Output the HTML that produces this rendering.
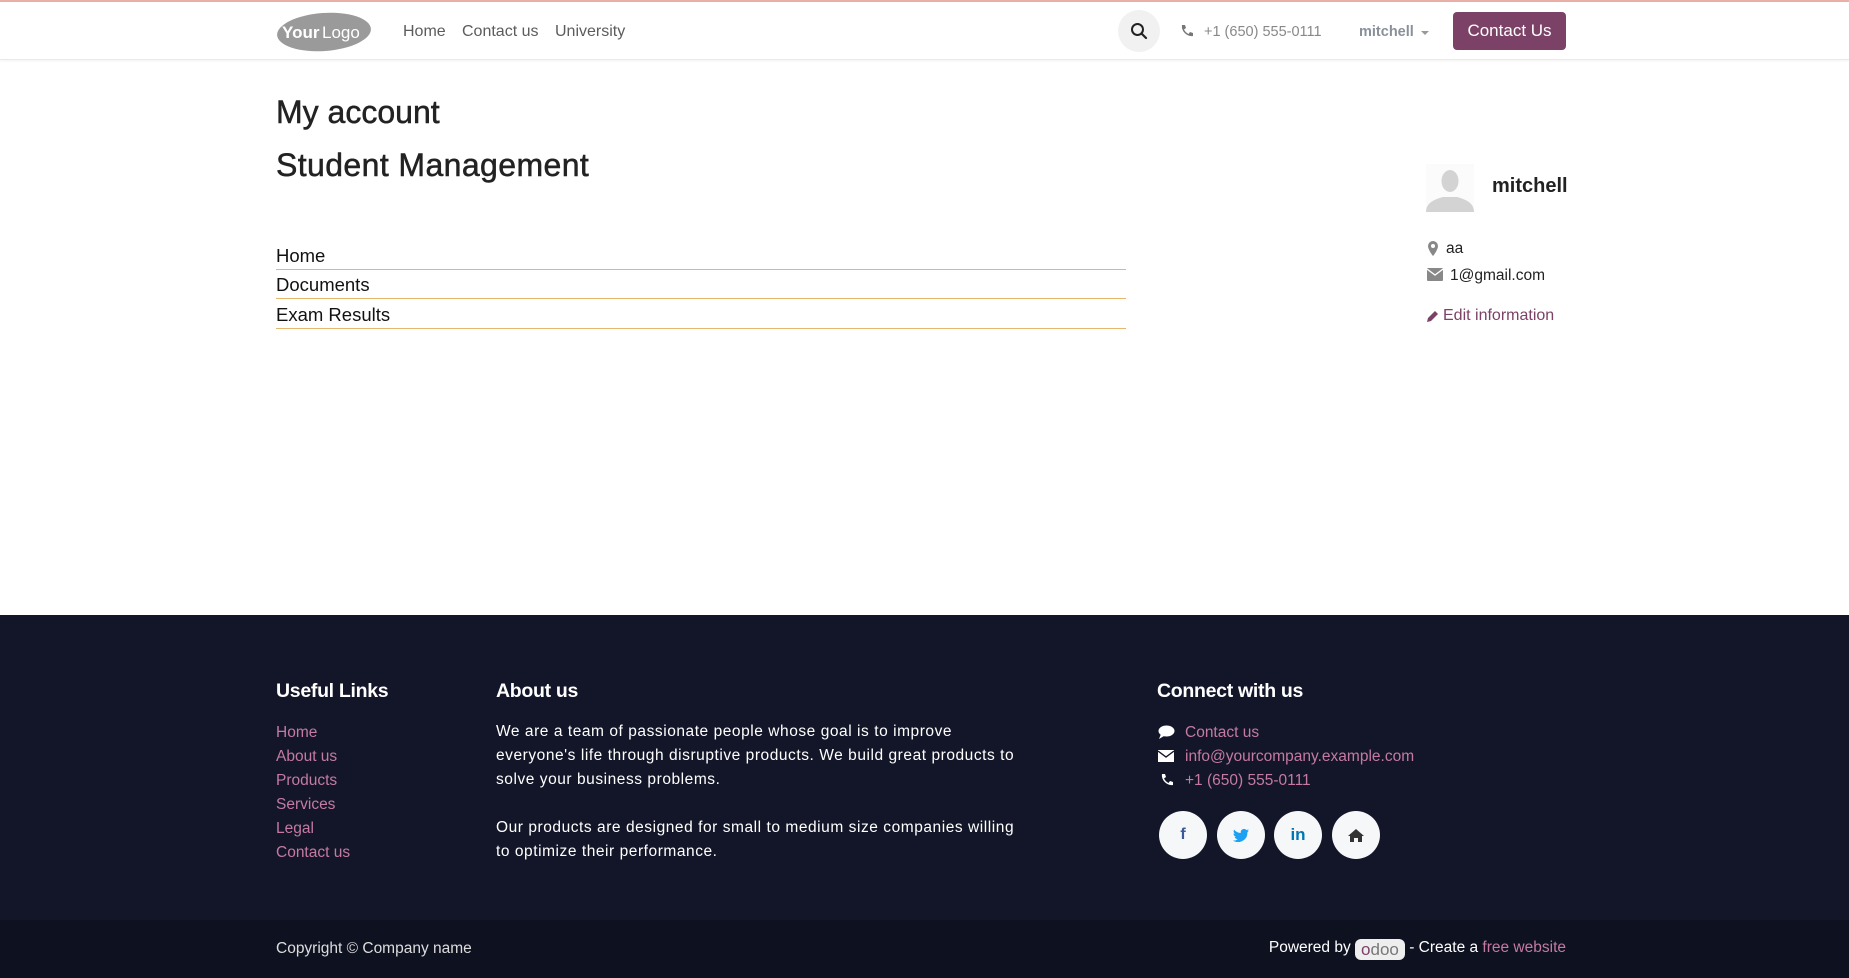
<!DOCTYPE html>
<html><head><meta charset="utf-8"><style>
*{box-sizing:border-box;margin:0;padding:0}
body{width:1849px;height:978px;overflow:hidden;font-family:"Liberation Sans",sans-serif;background:#fff;color:#212529;position:relative}
.abs{position:absolute;white-space:nowrap}
.topline{position:absolute;left:0;top:0;width:1849px;height:2px;background:#eab0a8}
.header{position:absolute;left:0;top:2px;width:1849px;height:58px;border-bottom:1px solid #e9e9e9;box-shadow:0 1px 3px rgba(0,0,0,.05)}
.nav{font-size:16px;color:#5c5c5c}
.btn{position:absolute;left:1453px;top:12px;width:113px;height:38px;background:#7c4167;border-radius:4px;color:#fff;font-size:17px;line-height:38px;text-align:center}
.lnk{font-size:18.5px;color:#111}
.hr{position:absolute;left:276px;width:850px;height:1px;background:#e4b66e}
.footer{position:absolute;left:0;top:615px;width:1849px;height:305px;background:#131628}
.bottom{position:absolute;left:0;top:920px;width:1849px;height:58px;background:#0e1120}
.fh{font-size:19.5px;color:#fff;font-weight:bold;letter-spacing:-.3px}
.fl{font-size:15.5px;color:#c47aa3}
.ft{font-size:15.5px;color:#fff;line-height:24px;letter-spacing:.55px}
.soc{position:absolute;top:811px;width:48px;height:48px;border-radius:50%;background:#f6f7f9;display:flex;align-items:center;justify-content:center;font-weight:bold;font-size:16px}
.h{-webkit-text-stroke:.5px #222;color:#222}
</style></head><body>
<div class="topline"></div>
<div class="header"></div>
<svg class="abs" style="left:276px;top:12px" width="96" height="40" viewBox="0 0 96 40"><ellipse cx="48" cy="20" rx="47" ry="19" fill="#9a9a9a" transform="rotate(-4 48 20)"/><text x="6" y="26" font-family="Liberation Sans" font-weight="bold" font-size="17" fill="#fff">Your</text><text x="46" y="26" font-family="Liberation Sans" font-size="17" fill="#fff">Logo</text></svg>
<div class="abs nav" style="left:403px;top:23px">Home</div>
<div class="abs nav" style="left:462px;top:23px">Contact us</div>
<div class="abs nav" style="left:555px;top:23px">University</div>
<div class="abs" style="left:1118px;top:10px;width:42px;height:42px;border-radius:50%;background:#f1f1f1"></div>
<svg class="abs" style="left:1130px;top:22px" width="18" height="18" viewBox="0 0 18 18"><circle cx="7.5" cy="7.5" r="5.5" fill="none" stroke="#222" stroke-width="2"/><path d="M11.5 11.5L16 16" stroke="#222" stroke-width="2.2" stroke-linecap="round"/></svg>
<svg class="abs" style="left:1180px;top:24px" width="14" height="14" viewBox="0 0 14 14"><path d="M2 1l3 0 1 3-2 1.5c1 2 2.5 3.5 4.5 4.5L10 8l3 1v3c-6 1-12-5-11-11z" fill="#777"/></svg>
<div class="abs" style="left:1204px;top:24px;font-size:14.5px;color:#888">+1 (650) 555-0111</div>
<div class="abs" style="left:1359px;top:24px;font-size:14.5px;color:#8a8f99;font-weight:bold">mitchell</div>
<div class="abs" style="left:1421px;top:31px;width:0;height:0;border-left:4px solid transparent;border-right:4px solid transparent;border-top:4px solid #999"></div>
<div class="btn">Contact Us</div>

<div class="abs h" style="left:276px;top:94px;font-size:32px">My account</div>
<div class="abs h" style="left:276px;top:147px;font-size:32px;letter-spacing:.4px">Student Management</div>

<div class="abs lnk" style="left:276px;top:245px">Home</div>
<div class="hr" style="top:269px"></div>
<div class="abs lnk" style="left:276px;top:274px">Documents</div>
<div class="hr" style="top:298px"></div>
<div class="abs lnk" style="left:276px;top:304px">Exam Results</div>
<div class="hr" style="top:328px"></div>

<svg class="abs" style="left:1426px;top:164px" width="48" height="48" viewBox="0 0 48 48"><rect width="48" height="48" fill="#fbfbfb"/><ellipse cx="24" cy="17" rx="8.5" ry="11" fill="#d3d3d3"/><path d="M0 48c0-10 10-13 17-15h14c7 2 17 5 17 15z" fill="#d3d3d3"/></svg>
<div class="abs" style="left:1492px;top:175px;font-size:20px;font-weight:bold;color:#222">mitchell</div>
<svg class="abs" style="left:1428px;top:241px" width="10" height="15" viewBox="0 0 10 15"><path d="M5 0a5 5 0 0 0-5 5c0 4 5 10 5 10s5-6 5-10a5 5 0 0 0-5-5z" fill="#888"/><circle cx="5" cy="5" r="2" fill="#fff"/></svg>
<div class="abs" style="left:1446px;top:240px;font-size:15.5px;color:#222">aa</div>
<svg class="abs" style="left:1427px;top:268px" width="16" height="13" viewBox="0 0 16 13"><rect width="16" height="13" rx="1" fill="#888"/><path d="M0 1l8 6 8-6" fill="none" stroke="#fff" stroke-width="1.3"/></svg>
<div class="abs" style="left:1450px;top:267px;font-size:15.5px;color:#222">1@gmail.com</div>
<svg class="abs" style="left:1426px;top:309px" width="14" height="14" viewBox="0 0 14 14"><path d="M1 13l1-4 7-7 3 3-7 7z" fill="#7c4167"/></svg>
<div class="abs" style="left:1443px;top:307px;font-size:16px;color:#7c4167">Edit information</div>

<div class="footer"></div>
<div class="abs fh" style="left:276px;top:680px">Useful Links</div>
<div class="abs fl" style="left:276px;top:721px;line-height:24px">Home<br>About us<br>Products<br>Services<br>Legal<br>Contact us</div>
<div class="abs fh" style="left:496px;top:680px">About us</div>
<div class="abs ft" style="left:496px;top:720px">We are a team of passionate people whose goal is to improve<br>everyone's life through disruptive products. We build great products to<br>solve your business problems.<br><br>Our products are designed for small to medium size companies willing<br>to optimize their performance.</div>
<div class="abs fh" style="left:1157px;top:680px">Connect with us</div>
<svg class="abs" style="left:1158px;top:725px" width="17" height="14" viewBox="0 0 17 14"><ellipse cx="8.5" cy="6" rx="8" ry="5.5" fill="#fff"/><path d="M3 9l-2 5 5-3z" fill="#fff"/></svg>
<svg class="abs" style="left:1158px;top:750px" width="16" height="12" viewBox="0 0 16 12"><rect width="16" height="12" fill="#fff"/><path d="M0 1l8 6 8-6" fill="none" stroke="#131628" stroke-width="1.4"/></svg>
<svg class="abs" style="left:1160px;top:773px" width="14" height="14" viewBox="0 0 14 14"><path d="M2 1l3 0 1 3-2 1.5c1 2 2.5 3.5 4.5 4.5L10 8l3 1v3c-6 1-12-5-11-11z" fill="#fff"/></svg>
<div class="abs fl" style="left:1185px;top:721px;line-height:24px">Contact us<br>info@yourcompany.example.com<br>+1 (650) 555-0111</div>
<div class="soc" style="left:1159px;color:#3b5998">f</div>
<div class="soc" style="left:1217px"><svg width="16" height="13" viewBox="0 0 16 13"><path d="M16 1.5c-.6.3-1.2.4-1.9.5.7-.4 1.2-1 1.4-1.8-.6.4-1.3.6-2.1.8A3.3 3.3 0 0 0 7.8 4C5.1 3.9 2.7 2.6 1.1.6.2 2.1.7 4 2 4.9c-.5 0-1-.2-1.5-.4 0 1.6 1.1 3 2.6 3.3-.5.1-1 .2-1.5.1.4 1.3 1.7 2.3 3.1 2.3A6.6 6.6 0 0 1 0 11.5 9.3 9.3 0 0 0 14.4 3.2c.6-.5 1.2-1 1.6-1.7z" fill="#1da1f2"/></svg></div>
<div class="soc" style="left:1274px;color:#0077b5;font-size:17px">in</div>
<div class="soc" style="left:1332px"><svg width="16" height="13" viewBox="0 0 16 13"><path d="M8 0l8 7h-2v6h-4V9H6v4H2V7H0z" fill="#333"/></svg></div>

<div class="bottom"></div>
<div class="abs" style="left:276px;top:940px;font-size:15.5px;color:#ddd">Copyright © Company name</div>
<div class="abs" style="right:283px;top:939px;font-size:15.5px;color:#fff">Powered by <span style="display:inline-block;background:#eee;border-radius:6px;padding:0 6px;color:#777;font-size:17px;line-height:21px;vertical-align:-3px"><span style="color:#7c4167">o</span>doo</span> - Create a <span style="color:#c47aa3">free website</span></div>
</body></html>
